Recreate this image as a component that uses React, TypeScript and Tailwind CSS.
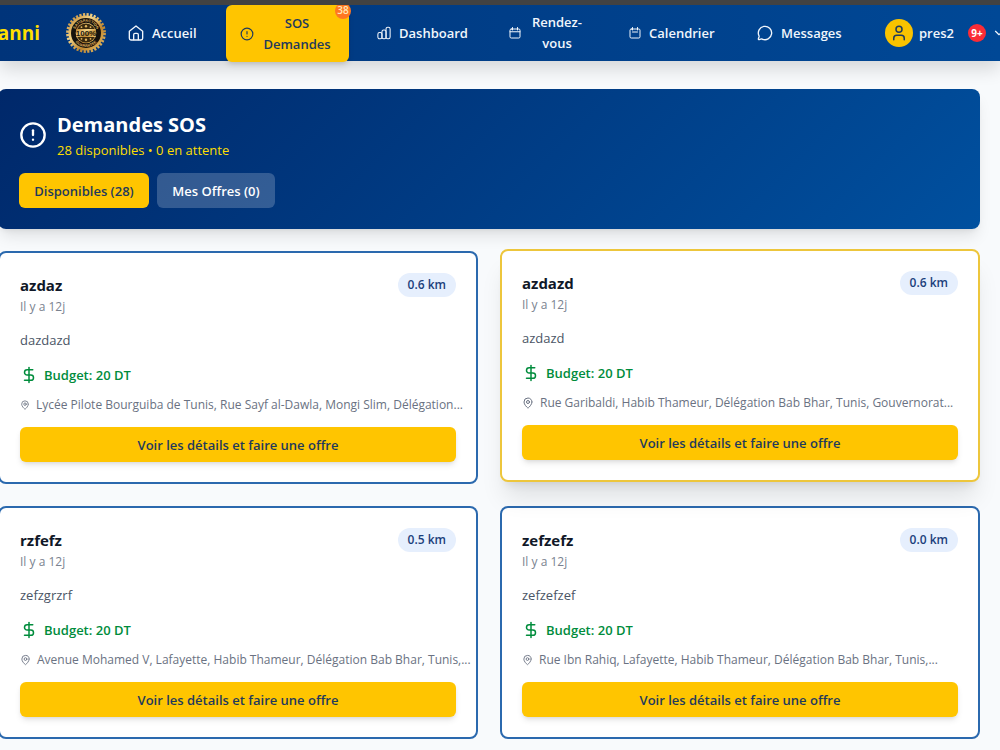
import { AlertCircle, ChevronDown, DollarSign, MapPin, MessageCircle, User } from 'lucide-react';
import clsx from 'clsx';
import type { ReactNode } from 'react';

type Demande = {
  title: string;
  description: string;
  distance: string;
  address: string;
  pin: string;
  active?: boolean;
};

const demandes: Demande[] = [
  {
    title: 'azdaz',
    description: 'dazdazd',
    distance: '0.6 km',
    address: 'Lycée Pilote Bourguiba de Tunis, Rue Sayf al-Dawla, Mongi Slim, Délégation...',
    pin: 'w-2.5 mr-1.5',
  },
  {
    title: 'azdazd',
    description: 'azdazd',
    distance: '0.6 km',
    address: 'Rue Garibaldi, Habib Thameur, Délégation Bab Bhar, Tunis, Gouvernorat...',
    pin: 'w-3 mr-1.5',
    active: true,
  },
  {
    title: 'rzfefz',
    description: 'zefzgrzrf',
    distance: '0.5 km',
    address: 'Avenue Mohamed V, Lafayette, Habib Thameur, Délégation Bab Bhar, Tunis,...',
    pin: 'w-[11px] mr-1.5',
  },
  {
    title: 'zefzefz',
    description: 'zefzefzef',
    distance: '0.0 km',
    address: 'Rue Ibn Rahiq, Lafayette, Habib Thameur, Délégation Bab Bhar, Tunis,...',
    pin: 'w-[11px] mr-1.5',
  },
];

const stroke = {
  viewBox: '0 0 24 24',
  fill: 'none',
  stroke: 'currentColor',
  strokeWidth: 2,
  strokeLinecap: 'round',
  strokeLinejoin: 'round',
} as const;

function HomeIcon() {
  return (
    <svg {...stroke} className="size-4 shrink-0">
      <path d="M2 9.5 12 1.5l10 8V20a2.500 2.500 0 0 1-2.500 2.500h-15A2.500 2.500 0 0 1 2 20Z" />
      <path d="M8.500 22v-7.500a2 2 0 0 1 2-2h3a2 2 0 0 1 2 2V22" />
    </svg>
  );
}

function BarsIcon() {
  return (
    <svg {...stroke} strokeWidth={1.8} className="size-3.5 shrink-0">
      <rect x="1.500" y="11" width="7" height="11" rx="3" />
      <rect x="8.500" y="7" width="7" height="15" rx="3" />
      <rect x="15.500" y="2" width="7" height="20" rx="3" />
    </svg>
  );
}

function CalendarIcon({ className, short }: { className: string; short?: boolean }) {
  return (
    <svg {...stroke} className={className}>
      <rect x="2" y="4" width="20" height="18" rx="2.500" />
      <path d={short ? 'M7 10h10M7 1v5M17 1v5' : 'M2 9.500h20M7 1v5M17 1v5'} />
    </svg>
  );
}

function GuaranteeSeal() {
  return (
    <svg viewBox="0 0 40 40" className="ml-6.5 size-10 shrink-0" role="img" aria-label="Satisfaction guarantee">
      <defs>
        <linearGradient id="gold" x1="0" y1="0" x2="1" y2="1">
          <stop offset="0" stopColor="#b97a22" />
          <stop offset="0.35" stopColor="#f3d488" />
          <stop offset="0.65" stopColor="#bd852f" />
          <stop offset="1" stopColor="#ecc46c" />
        </linearGradient>
        <path id="sealTop" d="M8.700 20a11.300 11.300 0 0 1 22.600 0" />
        <path id="sealBottom" d="M6 20a14 14 0 0 0 28 0" />
      </defs>
      <circle cx="20" cy="20" r="18.400" fill="none" stroke="url(#gold)" strokeWidth="3" strokeDasharray="2.200 1.412" />
      <circle cx="20" cy="20" r="17.600" fill="url(#gold)" />
      <circle cx="20" cy="20" r="15" fill="#15120d" />
      <circle cx="20" cy="20" r="10.300" fill="url(#gold)" />
      <circle cx="20" cy="20" r="9.600" fill="#3a2a10" />
      <path d="M10.300 16h19.400v8h-19.400z" fill="url(#gold)" />
      <g fill="#e0b45c" fontFamily="Liberation Sans, sans-serif" fontWeight="700" fontSize="3.800">
        <text textAnchor="middle">
          <textPath href="#sealTop" startOffset="50%">SATISFACTION</textPath>
        </text>
        <text textAnchor="middle">
          <textPath href="#sealBottom" startOffset="50%">GUARANTEE</textPath>
        </text>
      </g>
      <text x="20" y="22.900" textAnchor="middle" fill="#21190c" fontFamily="Liberation Sans, sans-serif" fontWeight="700" fontSize="8">
        100%
      </text>
      <g fill="#e0b45c">
        <circle cx="15.500" cy="14.200" r="0.900" />
        <circle cx="20" cy="13.200" r="1.200" />
        <circle cx="24.500" cy="14.200" r="0.900" />
        <circle cx="15.500" cy="25.800" r="0.900" />
        <circle cx="20" cy="26.800" r="1.200" />
        <circle cx="24.500" cy="25.800" r="0.900" />
      </g>
    </svg>
  );
}

function NavItem({ icon, className, children }: { icon: ReactNode; className: string; children: ReactNode }) {
  return (
    <a href="#" className={clsx('flex shrink-0 items-center pl-3.5', className)}>
      {icon}
      {children}
    </a>
  );
}

function Header() {
  return (
    <header className="relative z-10 flex h-14 items-center bg-linear-to-r from-[#00347a] to-[#004896] text-[13px] leading-[21px] font-semibold text-[#f1f6fc] shadow-[0_8px_18px_rgba(0,0,0,0.14)]">
      <a href="#" className="-ml-3 flex w-[52px] shrink-0 justify-end text-[19px] font-bold text-[#fedf00]">
        Fanni
      </a>
      <GuaranteeSeal />
      <nav className="ml-2 flex shrink-0 items-center gap-3.5">
        <NavItem className="w-[98px] gap-2" icon={<HomeIcon />}>
          Accueil
        </NavItem>
        <NavItem
          className="relative h-[57px] w-[123px] gap-2 rounded-md bg-[#ffc500] pt-px text-[#1f3a5c] shadow-md"
          icon={<AlertCircle className="size-3.5 shrink-0" />}
        >
          <span className="w-[70px] text-center">SOS Demandes</span>
          <span className="absolute -top-0.5 -right-0.5 flex size-4 items-center justify-center rounded-full bg-[#ff7722] text-[10px] text-[#ffe9b8]">
            38
          </span>
        </NavItem>
        <NavItem className="w-[118px] gap-2" icon={<BarsIcon />}>
          Dashboard
        </NavItem>
        <NavItem className="w-[106px] gap-2" icon={<CalendarIcon className="size-3 shrink-0" />}>
          <span className="w-[56px] text-center">Rendez-vous</span>
        </NavItem>
        <NavItem className="w-[114px] gap-2" icon={<CalendarIcon short className="size-3 shrink-0" />}>
          Calendrier
        </NavItem>
        <NavItem className="w-[114px] gap-2" icon={<MessageCircle className="size-4 shrink-0" />}>
          Messages
        </NavItem>
      </nav>
      <button className="ml-7 flex shrink-0 items-center">
        <span className="flex size-7 items-center justify-center rounded-full bg-[#f9c300] text-[#1f3a5c]">
          <User className="size-[18px]" />
        </span>
        <span className="ml-1.5 w-[35px] text-left">pres2</span>
        <span className="ml-3.5 flex size-[18px] items-center justify-center rounded-full bg-[#fb2c36] text-[10px] font-bold text-white">
          9+
        </span>
        <ChevronDown className="ml-1.5 size-3.5" />
      </button>
    </header>
  );
}

function Banner() {
  return (
    <section className="rounded-lg bg-linear-135 from-[#00286a] to-[#00509f] p-[21px] shadow-lg">
      <div className="flex items-center gap-2.5 text-white">
        <AlertCircle className="size-7" />
        <div>
          <h1 className="text-xl leading-[30px] font-bold">Demandes SOS</h1>
          <p className="text-[13px] leading-5 text-[#fedf00]">28 disponibles • 0 en attente</p>
        </div>
      </div>
      <div className="mt-[13px] flex gap-2 text-[13px] font-semibold">
        <button className="h-[35px] w-[130px] rounded-md bg-[#ffc500] pt-0.5 text-[#1f3a5c]">Disponibles (28)</button>
        <button className="h-[35px] w-[118px] rounded-md bg-white/20 pt-0.5 text-white">Mes Offres (0)</button>
      </div>
    </section>
  );
}

function DemandeCard({ demande }: { demande: Demande }) {
  return (
    <article
      className={clsx(
        'min-w-0 rounded-lg border-2 bg-white p-5',
        demande.active ? '-translate-y-0.5 border-[#edc63c] shadow-xl' : 'border-[#2b69ae]'
      )}
    >
      <div className="flex items-start justify-between">
        <div>
          <h2 className="text-[15px] leading-6 font-bold text-[#101828]">{demande.title}</h2>
          <p className="text-xs leading-5 text-[#7a828f]">Il y a 12j</p>
        </div>
        <span className="rounded-full bg-[#e6effd] px-2.5 text-xs leading-6 font-semibold text-[#1c3f7c]">
          {demande.distance}
        </span>
      </div>
      <p className="mt-3 text-[13px] leading-[22px] text-[#4a5565]">{demande.description}</p>
      <p className="mt-3 flex items-center gap-1.5 text-[13px] leading-6 font-semibold text-[#008c3c]">
        <DollarSign className="size-[18px]" />
        Budget: 20 DT
      </p>
      <p className="mt-2 flex items-center text-xs leading-5 whitespace-nowrap text-[#6a7282]">
        <MapPin className={clsx('h-3 shrink-0', demande.pin)} />
        {demande.address}
      </p>
      <button className="mt-3 h-[35px] w-full rounded-md bg-[#ffc500] pt-0.5 text-[13px] font-semibold text-[#1f3a5c] shadow-md">
        Voir les détails et faire une offre
      </button>
    </article>
  );
}

export default function App() {
  return (
    <div className="min-h-screen overflow-hidden bg-[#f8fafc] font-['Open_Sans','Noto_Sans',sans-serif]">
      <div className="relative z-20 h-[5px] bg-[#424242]" />
      <Header />
      <main className="-ml-0.5 pt-7 pr-5 pb-3">
        <Banner />
        <div className="mt-[22px] grid grid-cols-2 gap-[22px]">
          {demandes.map((demande) => (
            <DemandeCard key={demande.title} demande={demande} />
          ))}
        </div>
      </main>
    </div>
  );
}
